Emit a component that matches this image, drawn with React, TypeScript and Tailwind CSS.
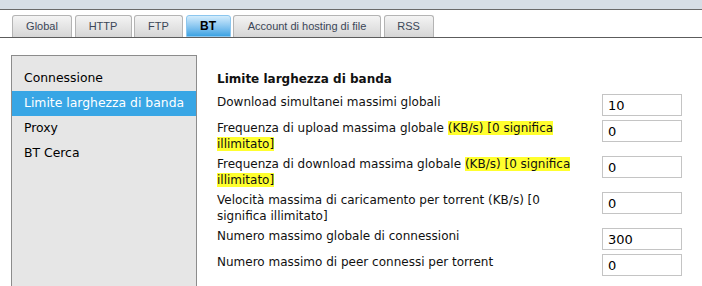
const tabs = [
  { label: "Global", w: "w-[60px]" },
  { label: "HTTP", w: "w-[57px]" },
  { label: "FTP", w: "w-[49px]" },
  { label: "BT", w: "w-[45px]", active: true },
  { label: "Account di hosting di file", w: "w-[148px]" },
  { label: "RSS", w: "w-[50px]" },
];

const menu = ["Connessione", "Limite larghezza di banda", "Proxy", "BT Cerca"];

function Mark({ children }: { children: React.ReactNode }) {
  return <span className="bg-[#ffff2e]">{children}</span>;
}

function Row({ label, value }: { label: React.ReactNode; value: string }) {
  return (
    <div className="flex items-start">
      <div className="w-[385px] leading-4">{label}</div>
      <input
        defaultValue={value}
        className="w-[80px] h-[22px] border border-[#c4c4c4] bg-white px-[5px] text-[13px] text-black outline-none"
      />
    </div>
  );
}

export default function App() {
  return (
    <div className="w-[702px] h-[286px] overflow-hidden bg-white font-['DejaVu_Sans',Verdana,sans-serif] text-[12px] text-[#111]">
      <div className="h-[9px] bg-[#d7dee6]" />
      <div className="h-px bg-[#6a6a6a]" />
      <div className="flex items-end gap-[2.5px] h-[28px] pl-[12px] border-b border-[#5c5c5c] font-['Liberation_Sans',Arial,sans-serif] text-[11px]">
        {tabs.map((t) =>
          t.active ? (
            <div
              key={t.label}
              className={`${t.w} h-[22px] flex items-center justify-center rounded-t-[3px] border border-[#8cc6ee] bg-gradient-to-b from-[#d2ecfc] to-[#3aa3e3] font-bold text-[12px] text-black`}
            >
              {t.label}
            </div>
          ) : (
            <div
              key={t.label}
              className={`${t.w} h-[22px] flex items-center justify-center rounded-t-[3px] border border-b-0 border-[#b4b4b4] bg-gradient-to-b from-[#f4f4f4] to-[#d6d6d6] text-[#3b4657]`}
            >
              {t.label}
            </div>
          )
        )}
      </div>
      <div className="flex pt-[17px] pl-[11px]">
        <div className="w-[186px] h-[260px] border border-[#8c8c8c] bg-[#e6e6e6] pt-[10px] text-[12.4px]">
          {menu.map((m, i) => (
            <div
              key={m}
              className={`h-[25px] flex items-center pl-[12px] ${i === 1 ? "bg-[#38a6e5] text-white" : "text-black"}`}
            >
              {m}
            </div>
          ))}
        </div>
        <div className="pl-[20px] pt-[16px] flex flex-col gap-[4px]">
          <div className="font-bold leading-4 mb-[3px]">Limite larghezza di banda</div>
          <Row label="Download simultanei massimi globali" value="10" />
          <Row
            label={
              <>
                Frequenza di upload massima globale <Mark>(KB/s) [0 significa</Mark>
                <br />
                <Mark>illimitato]</Mark>
              </>
            }
            value="0"
          />
          <Row
            label={
              <>
                Frequenza di download massima globale <Mark>(KB/s) [0 significa</Mark>
                <br />
                <Mark>illimitato]</Mark>
              </>
            }
            value="0"
          />
          <Row
            label={
              <>
                Velocità massima di caricamento per torrent (KB/s) [0
                <br />
                significa illimitato]
              </>
            }
            value="0"
          />
          <Row label="Numero massimo globale di connessioni" value="300" />
          <Row label="Numero massimo di peer connessi per torrent" value="0" />
        </div>
      </div>
    </div>
  );
}
